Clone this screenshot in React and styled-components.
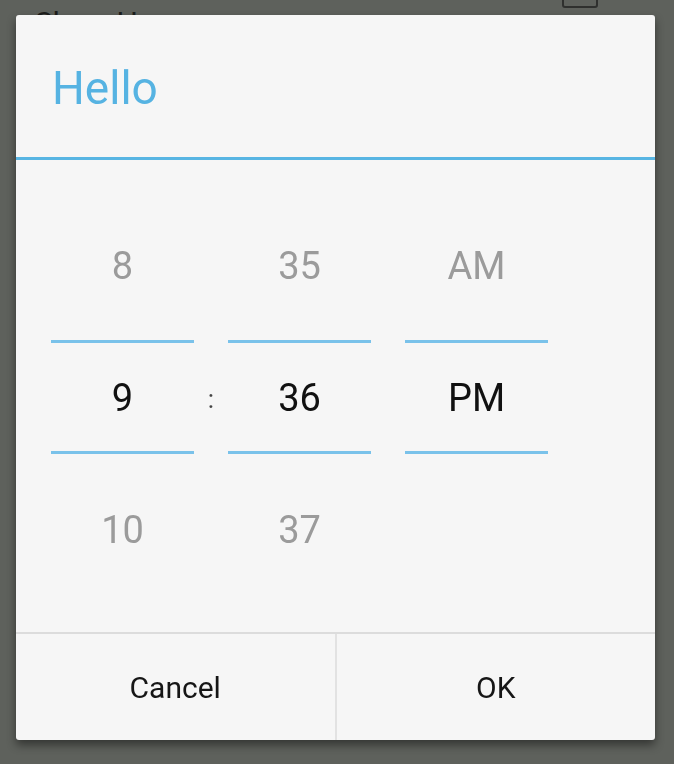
import styled, { createGlobalStyle } from "styled-components";

const GlobalStyle = createGlobalStyle`
  *, *::before, *::after {
    box-sizing: border-box;
  }
  html, body {
    margin: 0;
    padding: 0;
    height: 764px;
    overflow: hidden;
    background-color: #5e615c;
    font-family: Roboto, "Liberation Sans", sans-serif;
  }
`;

// the settings screen that sits dimmed behind the dialog
const Behind = styled.div`
  display: flex;
  justify-content: space-between;
  align-items: flex-start;
  margin-top: -28px;
  padding: 0 76px 0 35px;
`;

const BehindLabel = styled.span`
  padding-top: 33px;
  font-size: 30px;
  line-height: 36px;
  color: #1c1d1b;
`;

const BehindCheck = styled.span`
  width: 36px;
  height: 36px;
  border: 2px solid #2f302e;
  border-radius: 3px;
`;

const Overlay = styled.div`
  position: fixed;
  inset: 0;
  display: flex;
  align-items: flex-start;
  padding: 15px 19px 0 16px;
`;

const Dialog = styled.div`
  display: flex;
  flex-direction: column;
  width: 639px;
  height: 725px;
  background-color: #f6f6f6;
  border-radius: 3px;
  box-shadow: 0 5px 10px rgba(0, 0, 0, 0.45);
  overflow: hidden;
`;

const Title = styled.h2`
  display: flex;
  align-items: center;
  height: 145px;
  margin: 0;
  padding: 4px 0 0 36px;
  border-bottom: 3px solid #58b5e3;
  font-size: 46px;
  font-weight: 400;
  color: #56b3e2;
`;

const Picker = styled.div`
  display: flex;
  padding: 30px 35px 28px;
`;

const Column = styled.div`
  display: flex;
  flex-direction: column;
  width: 143px;
`;

const Cell = styled.div`
  display: flex;
  align-items: center;
  justify-content: center;
  height: ${(p) => (p.$selected ? 108 : 150)}px;
  padding-top: 2px;
  font-size: 38px;
  color: ${(p) => (p.$selected ? "#111111" : "#9b9b9b")};
`;

const Line = styled.div`
  height: 3px;
  background-color: #7ac2ea;
`;

const Separator = styled.div`
  display: flex;
  align-items: center;
  justify-content: center;
  width: 34px;
  height: 108px;
  margin-top: 153px;
  padding-top: 4px;
  font-size: 26px;
  color: #444;
`;

const ButtonBar = styled.div`
  display: flex;
  flex: 1;
  border-top: 2px solid #dcdcdc;
`;

const Button = styled.button`
  flex: 1;
  border: none;
  background: none;
  font-family: Roboto, "Liberation Sans", sans-serif;
  font-size: 30px;
  color: #161616;
  & + & {
    border-left: 2px solid #e2e2e2;
  }
`;

const columns = [
  { id: "hour", values: ["8", "9", "10"] },
  { id: "minute", values: ["35", "36", "37"] },
  { id: "ampm", values: ["AM", "PM", ""] },
];

function Wheel({ values }) {
  return (
    <Column>
      <Cell>{values[0]}</Cell>
      <Line />
      <Cell $selected>{values[1]}</Cell>
      <Line />
      <Cell>{values[2]}</Cell>
    </Column>
  );
}

export default function App() {
  return (
    <>
      <GlobalStyle />
      <Behind>
        <BehindLabel>Show Hour</BehindLabel>
        <BehindCheck />
      </Behind>
      <Overlay>
        <Dialog>
          <Title>Hello</Title>
          <Picker>
            <Wheel values={columns[0].values} />
            <Separator>:</Separator>
            <Wheel values={columns[1].values} />
            <Separator />
            <Wheel values={columns[2].values} />
          </Picker>
          <ButtonBar>
            <Button>Cancel</Button>
            <Button>OK</Button>
          </ButtonBar>
        </Dialog>
      </Overlay>
    </>
  );
}
